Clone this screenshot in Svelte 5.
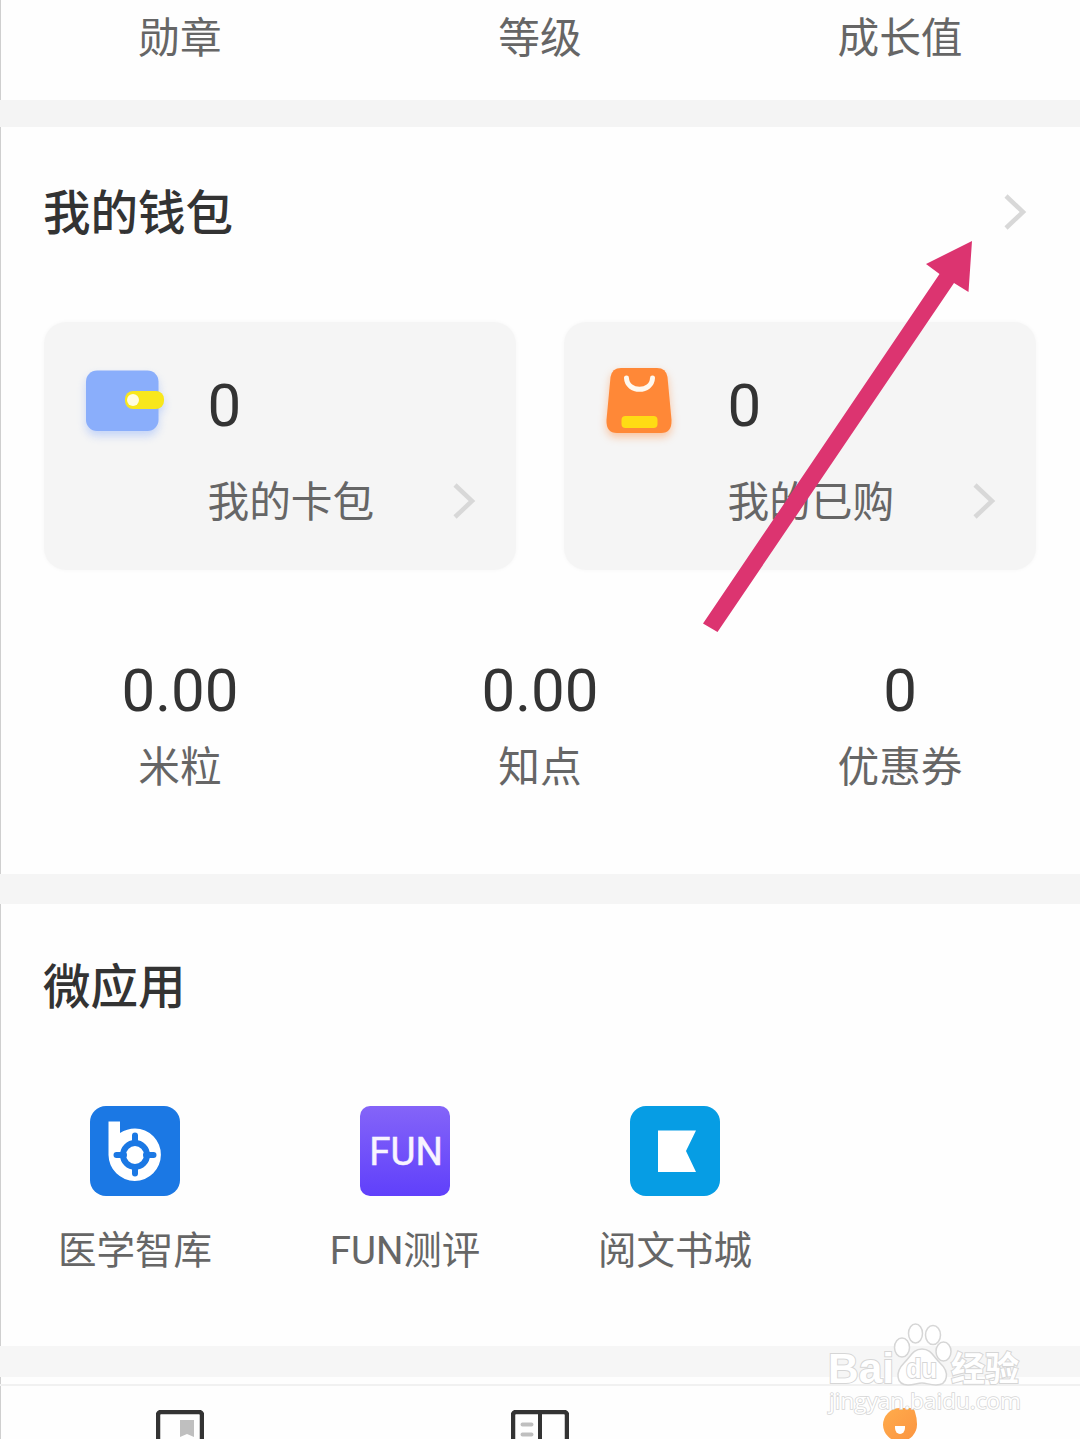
<script lang="ts">
  const honors = ['勋章', '等级', '成长值']

  const cards = [
    { icon: 'wallet', count: 0, label: '我的卡包' },
    { icon: 'bag', count: 0, label: '我的已购' }
  ]

  const stats = [
    { value: '0.00', label: '米粒' },
    { value: '0.00', label: '知点' },
    { value: '0', label: '优惠券' }
  ]

  const apps = [
    { icon: 'medical', label: '医学智库' },
    { icon: 'fun', label: 'FUN测评' },
    { icon: 'book', label: '阅文书城' }
  ]
</script>

{#snippet chevron()}
  <svg class="chevron" viewBox="0 0 24 40" width="24" height="40">
    <path d="M3 4 L20 20 L3 36" fill="none" stroke="currentColor" stroke-width="4.500" />
  </svg>
{/snippet}

<div class="page">
  <section class="honors">
    {#each honors as name}
      <span class="label">{name}</span>
    {/each}
  </section>

  <section class="wallet">
    <header>
      <h2>我的钱包</h2>
      {@render chevron()}
    </header>

    <div class="cards">
      {#each cards as card}
        <div class="card">
          {#if card.icon === 'wallet'}
            <svg class="card-icon blue" viewBox="0 0 84 72" width="84" height="72">
              <rect x="2" y="5.500" width="72.500" height="60.500" rx="11" fill="#8aaefb" />
              <rect x="41" y="26" width="39" height="18" rx="8" fill="#f8e71c" />
              <circle cx="49" cy="35" r="6" fill="#fffde0" />
            </svg>
          {:else}
            <svg class="card-icon orange" viewBox="0 0 84 72" width="84" height="72">
              <path d="M17 3 H53 Q62 3 63.500 12 L67.500 55 Q68 68 57 68 H13 Q2 68 2.500 55 L6.500 12 Q8 3 17 3Z" fill="#ff8837" />
              <path d="M22.500 13 C23 28 48 28 48.500 13" fill="none" stroke="#fff8ee" stroke-width="5" stroke-linecap="round" />
              <rect x="17.500" y="51" width="36" height="12" rx="4" fill="#ffdc14" />
            </svg>
          {/if}
          <div class="card-body">
            <span class="number">{card.count}</span>
            <span class="label">{card.label}</span>
          </div>
          {@render chevron()}
        </div>
      {/each}
    </div>

    <div class="stats">
      {#each stats as stat}
        <div class="stat">
          <span class="number">{stat.value}</span>
          <span class="label">{stat.label}</span>
        </div>
      {/each}
    </div>
  </section>

  <section class="apps">
    <header>
      <h2>微应用</h2>
    </header>
    <div class="app-list">
      {#each apps as app}
        <div class="app">
          <div class="tile {app.icon}">
            {#if app.icon === 'medical'}
              <svg viewBox="0 0 90 90" width="90" height="90">
                <path d="M18.500 15.500 H30 V27 Q37 22.500 45 22.500 A26.200 26.200 0 1 1 18.500 49Z" fill="#fff" />
                <circle cx="45" cy="49" r="12" fill="none" stroke="#1b78e4" stroke-width="6" />
                <path d="M45 29.500 V37 M45 61 V67.500 M26.500 49 H34 M56 49 H63.500" stroke="#1b78e4" stroke-width="6" stroke-linecap="round" />
              </svg>
            {:else if app.icon === 'fun'}
              FUN
            {:else}
              <svg viewBox="0 0 90 90" width="90" height="90">
                <path d="M28 24.500 H66 L56 45 L66 66 H28Z" fill="#fff" />
              </svg>
            {/if}
          </div>
          <span>{app.label}</span>
        </div>
      {/each}
    </div>
  </section>

  <nav>
    <div class="tab">
      <svg viewBox="0 0 48 40" width="48" height="40">
        <rect x="2" y="2" width="44" height="60" rx="3" fill="none" stroke="#333" stroke-width="4.500" />
        <path d="M24 10 H38 V27 L31 24 L24 27Z" fill="#bfbfbf" />
      </svg>
    </div>
    <div class="tab">
      <svg viewBox="0 0 58 40" width="58" height="40">
        <rect x="2" y="2" width="54" height="60" rx="3" fill="none" stroke="#333" stroke-width="4.500" />
        <path d="M29 2 V40" stroke="#333" stroke-width="4" />
        <path d="M11.500 14.500 H20.500 M11.500 24.500 H20.500" stroke="#bfbfbf" stroke-width="4" stroke-linecap="round" />
      </svg>
    </div>
    <div class="tab">
      <svg class="face" viewBox="0 0 40 40" width="40" height="40">
        <defs>
          <linearGradient id="face" x1="0" y1="0" x2="1" y2="1">
            <stop offset="0" stop-color="#ffac4c" />
            <stop offset="1" stop-color="#fb9440" />
          </linearGradient>
        </defs>
        <path d="M20 -2 H31 Q34 -2 35 2 Q37 8 37 14 A17 17 0 0 1 3 15 A17 17 0 0 1 20 -2Z" fill="url(#face)" />
        <path d="M15 16 H25 V18 A5 6 0 0 1 15 18Z" fill="#fff" />
      </svg>
    </div>
  </nav>

  <svg class="arrow" viewBox="0 0 270 392" width="270" height="392">
    <path d="M269 1 L223 24 L236.500 34 L0 383.500 L14.500 392 L251 43 L265.500 52Z" fill="#dc3470" />
  </svg>

  <svg class="watermark" viewBox="0 0 210 100" width="210" height="100">
    <g fill="#fff" stroke="#d6d6d6" stroke-width="2">
      <text class="logo" x="8" y="63" textLength="66" lengthAdjust="spacingAndGlyphs">Bai</text>
      <ellipse cx="82" cy="27.500" rx="7.500" ry="9.500" stroke-width="1.500" />
      <ellipse cx="95.500" cy="13.500" rx="7" ry="9.500" stroke-width="1.500" />
      <ellipse cx="113" cy="15" rx="7.500" ry="9.500" stroke-width="1.500" />
      <ellipse cx="123.500" cy="31.500" rx="7.500" ry="9.500" stroke-width="1.500" />
      <path d="M102 29 C111 29 113 36 120 43 C130 52 128 65 116 65 C109 65 107 63 102 63 C97 63 94 65 88 65 C76 65 75 52 84 43 C91 36 93 29 102 29Z" stroke-width="1.500" />
      <text class="du" x="86" y="58" textLength="31" lengthAdjust="spacingAndGlyphs">du</text>
      <text class="cn" x="131" y="61" textLength="68">经验</text>
      <text class="url" x="9" y="89" textLength="192" lengthAdjust="spacingAndGlyphs">jingyan.baidu.com</text>
    </g>
  </svg>
</div>

<style>
  :global(body) {
    margin: 0;
    background: #fefefe;
  }

  .page {
    position: relative;
    box-sizing: border-box;
    width: 1080px;
    height: 1439px;
    overflow: hidden;
    background: #fefefe;
    box-shadow: inset 1px 0 #cfcfcf;
    font-family: Roboto, 'Noto Sans CJK SC', sans-serif;
    color: #666;
  }

  section {
    box-sizing: border-box;
  }

  header {
    display: flex;
    justify-content: space-between;
    align-items: center;
    height: 60px;
    padding: 0 53px 0 43px;
  }

  h2 {
    margin: 0;
    padding-top: 4px;
    font-size: 47.5px;
    font-weight: 500;
    line-height: 60px;
    color: #333;
  }

  .label {
    font-size: 41.7px;
    line-height: 60px;
    white-space: nowrap;
  }

  .number {
    font-size: 60px;
    line-height: 70px;
    color: #333;
  }

  .chevron {
    display: block;
    color: #d8d8d8;
  }

  .honors {
    display: flex;
    height: 127px;
    padding-top: 9px;
    border-bottom: 27px solid #f4f4f4;
    text-align: center;
  }

  .honors .label {
    flex: 1;
  }

  .wallet {
    height: 777px;
    padding-top: 55px;
    border-bottom: 30px solid #f5f5f5;
  }

  .cards {
    display: flex;
    gap: 48px;
    margin-top: 80px;
    padding: 0 44px;
  }

  .card {
    box-sizing: border-box;
    display: flex;
    flex: 1;
    height: 248px;
    padding: 43px 40px 0;
    border-radius: 22px;
    background: #f5f5f5;
    box-shadow: 0 0 4px #f7f7f7;
  }

  .card-icon {
    flex: none;
    overflow: visible;
  }

  .card-icon.blue {
    filter: drop-shadow(0 5px 4px rgb(138 174 251 / 45%));
  }

  .card-icon.orange {
    filter: drop-shadow(0 4px 4px rgb(255 136 55 / 45%));
  }

  .card-body {
    display: flex;
    flex: 1;
    flex-direction: column;
    margin: 6px 0 0 39.5px;
  }

  .card-body .label {
    margin-top: 32px;
  }

  .card .chevron {
    margin-top: 116px;
  }

  .stats {
    display: flex;
    margin-top: 86px;
  }

  .stat {
    display: flex;
    flex: 1;
    flex-direction: column;
    align-items: center;
  }

  .stat .label {
    margin-top: 12px;
  }

  .apps {
    height: 473px;
    padding-top: 52px;
    border-bottom: 31px solid #f6f6f6;
  }

  .app-list {
    display: flex;
    margin-top: 90px;
  }

  .app {
    display: flex;
    flex-direction: column;
    align-items: center;
    width: 270px;
    font-size: 38.5px;
    line-height: 60px;
  }

  .app span {
    margin-top: 25px;
  }

  .tile {
    width: 90px;
    height: 90px;
    border-radius: 16px;
    overflow: hidden;
  }

  .tile svg {
    display: block;
  }

  .medical {
    background: #1b78e4;
  }

  .fun {
    box-sizing: border-box;
    padding-left: 2px;
    border-radius: 10px;
    background: linear-gradient(#8464f8, #6040fb);
    color: #f8f4ff;
    font-size: 38.5px;
    -webkit-text-stroke: 0.5px #f8f4ff;
    line-height: 91px;
    text-align: center;
  }

  .book {
    background: #069de4;
  }

  nav {
    display: flex;
    height: 60px;
    margin-top: 7px;
    border-top: 2px solid #f1f1f1;
  }

  .tab {
    display: flex;
    flex: 1;
    justify-content: center;
    padding-top: 24px;
  }

  .face {
    overflow: visible;
  }

  .arrow {
    position: absolute;
    top: 240px;
    left: 703px;
  }

  .watermark {
    position: absolute;
    top: 1320px;
    left: 820px;
  }

  .watermark text {
    font-family: 'Open Sans', 'Noto Sans CJK SC', sans-serif;
    paint-order: stroke;
  }

  .watermark .logo {
    font-family: 'Liberation Sans', sans-serif;
    font-size: 43px;
    font-weight: 700;
  }

  .watermark .du {
    font-family: 'Liberation Sans', sans-serif;
    font-size: 28px;
    font-weight: 700;
  }

  .watermark .cn {
    font-size: 34px;
    font-weight: 700;
  }

  .watermark .url {
    font-size: 22px;
    stroke-width: 1.5px;
  }
</style>
